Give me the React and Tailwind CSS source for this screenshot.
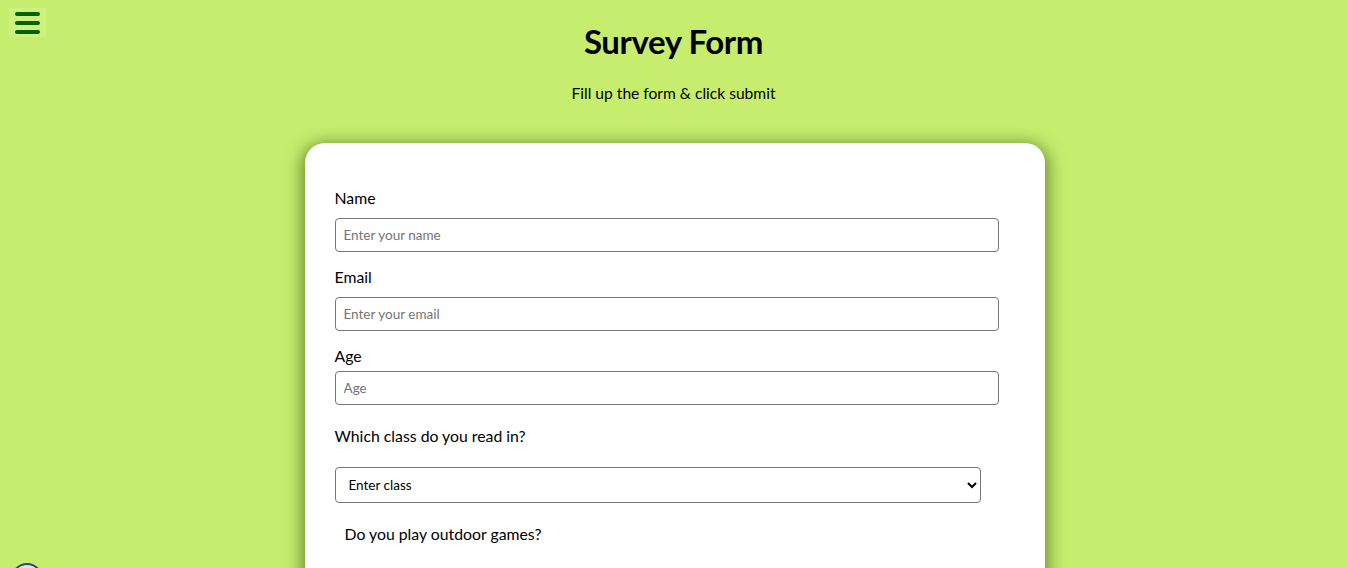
import React from "react";

export default function App() {
  const font = { fontFamily: "Lato, 'Open Sans', sans-serif" };
  return (
    <div className="relative min-h-[568px] w-full bg-[#c6ed6e] text-black overflow-hidden" style={font}>
      <div className="absolute left-[9px] top-[8px] w-[37px] h-[29px] bg-[#cdf07f] flex flex-col items-center justify-center gap-[5px]">
        <span className="block w-[25px] h-[4px] rounded-full bg-[#006400]"></span>
        <span className="block w-[25px] h-[4px] rounded-full bg-[#006400]"></span>
        <span className="block w-[25px] h-[4px] rounded-full bg-[#006400]"></span>
      </div>
      <div className="absolute left-[11px] top-[563px] w-[32px] h-[32px] rounded-full border-2 border-[#1f4e79] bg-[#d6e4ef]"></div>

      <div className="flex flex-col items-center">
        <h1 className="mt-[21px] text-[33px] font-bold leading-[40px] tracking-[-0.4px]">Survey Form</h1>
        <p className="mt-[22px] text-[15.6px] leading-[20px]">Fill up the form &amp; click submit</p>
        <div className="mt-[40px] ml-[2px] w-[740px] rounded-[20px] bg-white shadow-[0_4px_16px_4px_rgba(40,70,0,0.55)] pl-[30px] pr-[46px] pt-[45px] pb-[40px]">
          <label className="block text-[15.8px] leading-[20px]">Name</label>
          <input className="mt-[10px] block w-[664px] h-[34px] rounded-[4px] border border-[#767676] px-[8px] text-[13.5px] placeholder:text-[#757575]" placeholder="Enter your name" />
          <label className="mt-[15px] block text-[15.8px] leading-[20px]">Email</label>
          <input className="mt-[10px] block w-[664px] h-[34px] rounded-[4px] border border-[#767676] px-[8px] text-[13.5px] placeholder:text-[#757575]" placeholder="Enter your email" />
          <label className="mt-[15px] block text-[15.8px] leading-[20px]">Age</label>
          <input className="mt-[5px] block w-[664px] h-[34px] rounded-[4px] border border-[#767676] px-[8px] text-[13.5px] placeholder:text-[#757575]" placeholder="Age" />
          <p className="mt-[21px] text-[15.8px] leading-[20px]">Which class do you read in?</p>
          <select className="mt-[21px] block w-[646px] h-[36px] rounded-[4px] border border-[#767676] pl-[9px] text-[13.5px] bg-white" defaultValue="">
            <option value="">Enter class</option>
          </select>
          <p className="mt-[21px] ml-[10px] text-[15.8px] leading-[20px]">Do you play outdoor games?</p>
          <div className="h-[40px]"></div>
        </div>
      </div>
    </div>
  );
}
